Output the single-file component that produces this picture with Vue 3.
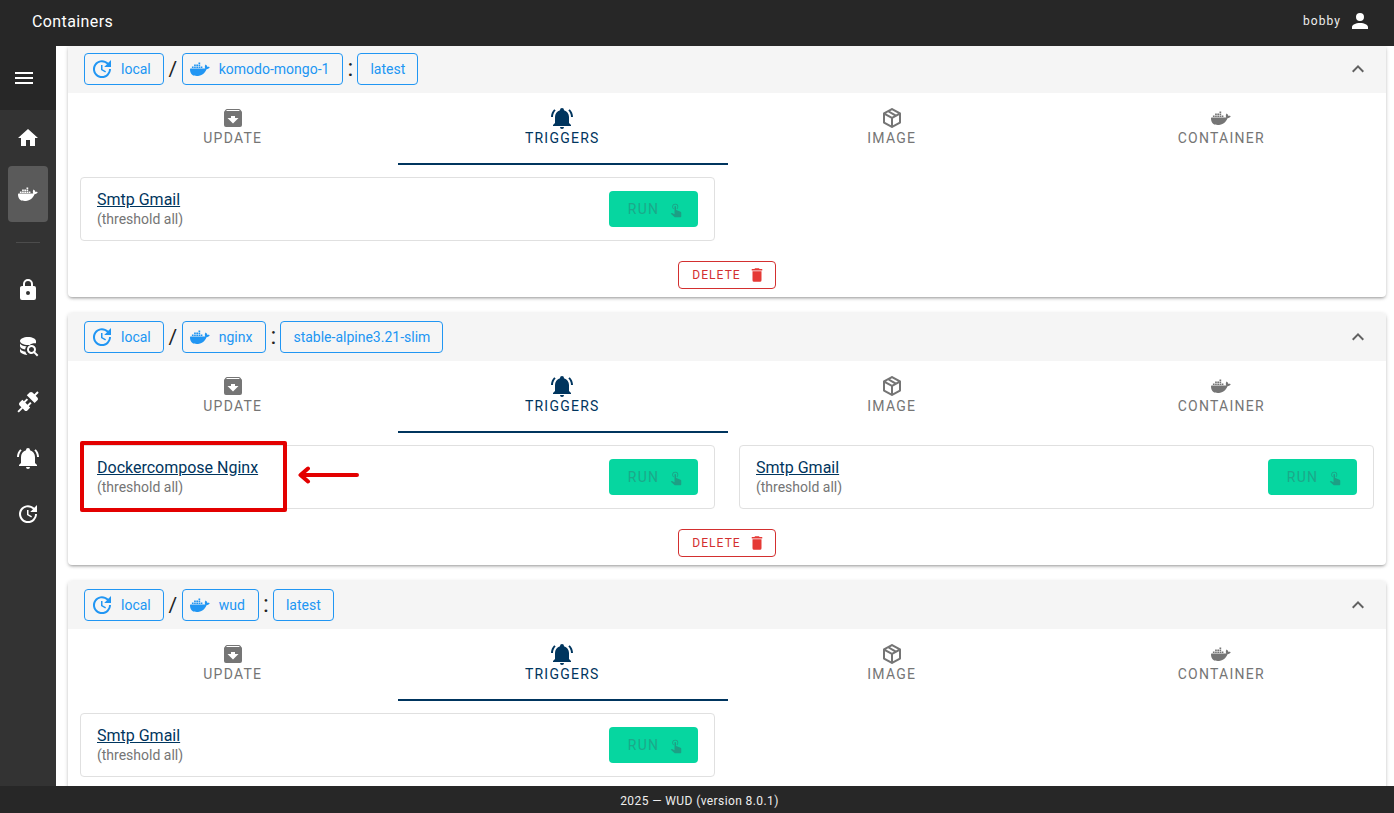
<script setup>
const p = {
  menu: 'M3,6H21V8H3V6M3,11H21V13H3V11M3,16H21V18H3V16Z',
  home: 'M10,20V14H14V20H19V12H22L12,3L2,12H5V20H10Z',
  docker: 'M21.81 10.25C21.75 10.21 21.25 9.82 20.18 9.82C19.9 9.82 19.62 9.85 19.35 9.89C19.14 8.5 17.97 7.79 17.92 7.76L17.63 7.6L17.44 7.87C17.2 8.24 17 8.65 16.9 9.08C16.7 9.88 16.82 10.64 17.23 11.28C16.74 11.55 15.95 11.62 15.79 11.62H2.62C2.28 11.62 2 11.9 2 12.24C2 13.38 2.18 14.5 2.56 15.56C3 16.68 3.64 17.5 4.47 18C5.41 18.57 7 18.9 8.78 18.9C9.59 18.9 10.39 18.83 11.19 18.68C12.29 18.5 13.34 18.11 14.31 17.56C15.11 17.09 15.81 16.5 16.42 15.8C17.45 14.63 18.06 13.33 18.5 12.17H18.69C19.81 12.17 20.5 11.72 20.88 11.34C21.13 11.11 21.32 10.83 21.45 10.5L21.53 10.27L21.81 10.25M3.9 9.6H5.6V11.1H3.9V9.6M6.1 9.6H7.8V11.1H6.1V9.6M8.3 9.6H10V11.1H8.3V9.6M10.5 9.6H12.2V11.1H10.5V9.6M12.7 9.6H14.4V11.1H12.7V9.6M6.1 7.6H7.8V9.1H6.1V7.6M8.3 7.6H10V9.1H8.3V7.6M10.5 7.6H12.2V9.1H10.5V7.6M10.5 5.6H12.2V7.1H10.5V5.6Z',
  lock: 'M12,17A2,2 0 0,0 14,15C14,13.89 13.1,13 12,13A2,2 0 0,0 10,15A2,2 0 0,0 12,17M18,8A2,2 0 0,1 20,10V20A2,2 0 0,1 18,22H6A2,2 0 0,1 4,20V10C4,8.89 4.9,8 6,8H7V6A5,5 0 0,1 12,1A5,5 0 0,1 17,6V8H18M12,3A3,3 0 0,0 9,6V8H15V6A3,3 0 0,0 12,3Z',
  db: 'M18.68,12.32C16.92,10.56 14.07,10.56 12.32,12.32C10.56,14.08 10.56,16.93 12.32,18.68C13.81,20.17 16.11,20.38 17.85,19.32L21,22.39L22.39,21L19.32,17.89C20.39,16.15 20.17,13.83 18.68,12.32M17.27,17.27C16.29,18.25 14.71,18.25 13.73,17.27C12.75,16.29 12.75,14.71 13.73,13.73C14.71,12.75 16.29,12.75 17.27,13.73C18.25,14.71 18.25,16.29 17.27,17.27M12,3C7.58,3 4,4.79 4,7C4,9.21 7.58,11 12,11C12.6,11 13.2,10.97 13.77,10.9C14.8,9.8 16.3,9.3 20,9.3V7C20,4.79 16.42,3 12,3M4,9V12C4,13.7 6.1,15 9.1,15.6C9.2,14.4 9.7,13.2 10.6,12.3C7.2,12.1 4,10.9 4,9M4,14V17C4,19 7.2,20.6 11.4,21C10.3,20.1 9.6,18.9 9.3,17.6C6.8,17.2 4,16 4,14Z',
  plug: 'M21.4 7.5C22.2 8.3 22.2 9.6 21.4 10.3L18.6 13.1L10.8 5.3L13.6 2.5C14.4 1.7 15.7 1.7 16.5 2.5L18.3 4.3L21.3 1.3L22.7 2.7L19.7 5.7L21.4 7.5M15.6 13.3L14.2 11.9L11.4 14.7L9.3 12.6L12.1 9.8L10.7 8.4L7.9 11.2L6.4 9.8L3.6 12.6C2.8 13.4 2.8 14.7 3.6 15.4L5.4 17.2L1.4 21.2L2.8 22.6L6.8 18.6L8.6 20.4C9.4 21.2 10.7 21.2 11.4 20.4L14.2 17.6L12.8 16.2L15.6 13.3Z',
  bell: 'M21,19V20H3V19L5,17V11C5,7.9 7.03,5.17 10,4.29C10,4.19 10,4.1 10,4A2,2 0 0,1 12,2A2,2 0 0,1 14,4C14,4.1 14,4.19 14,4.29C16.97,5.17 19,7.9 19,11V17L21,19M14,21A2,2 0 0,1 12,23A2,2 0 0,1 10,21M19.75,3.19L18.33,4.61C20.04,6.3 21,8.6 21,11H23C23,8.07 21.84,5.25 19.75,3.19M1,11H3C3,8.6 3.96,6.3 5.67,4.61L4.25,3.19C2.16,5.25 1,8.07 1,11Z',
  update: 'M21,10.12H14.22L16.96,7.3C14.23,4.6 9.81,4.5 7.08,7.2C4.35,9.91 4.35,14.28 7.08,17C9.81,19.7 14.23,19.7 16.96,17C18.32,15.65 19,14.08 19,12.1H21C21,14.08 20.12,16.65 18.36,18.39C14.85,21.87 9.15,21.87 5.64,18.39C2.14,14.92 2.11,9.28 5.62,5.81C9.13,2.34 14.76,2.34 18.27,5.81L21,3V10.12M12.5,8V12.25L16,14.33L15.28,15.54L11,13V8H12.5Z',
  account: 'M12,4A4,4 0 0,1 16,8A4,4 0 0,1 12,12A4,4 0 0,1 8,8A4,4 0 0,1 12,4M12,14C16.42,14 20,15.79 20,18V20H4V18C4,15.79 7.58,14 12,14Z',
  pkg: 'M21,16.5C21,16.88 20.79,17.21 20.47,17.38L12.57,21.82C12.41,21.94 12.21,22 12,22C11.79,22 11.59,21.94 11.43,21.82L3.53,17.38C3.21,17.21 3,16.88 3,16.5V7.5C3,7.12 3.21,6.79 3.53,6.62L11.43,2.18C11.59,2.06 11.79,2 12,2C12.21,2 12.41,2.06 12.57,2.18L20.47,6.62C20.79,6.79 21,7.12 21,7.5V16.5M12,4.15L10.11,5.22L16,8.61L17.96,7.5L12,4.15M6.04,7.5L12,10.85L13.96,9.75L8.08,6.35L6.04,7.5M5,15.91L11,19.29V12.58L5,9.21V15.91M19,15.91V9.21L13,12.58V19.29L19,15.91Z',
  pkgDown: 'M5.12,5L5.93,4H17.93L18.87,5M12,17.5L6.5,12H10V10H14V12H17.5L12,17.5M20.54,5.23L19.15,3.55C18.88,3.21 18.47,3 18,3H6C5.53,3 5.12,3.21 4.84,3.55L3.46,5.23C3.17,5.57 3,6 3,6.5V19A2,2 0 0,0 5,21H19A2,2 0 0,0 21,19V6.5C21,6 20.83,5.57 20.54,5.23Z',
  tap: 'M10,9A1,1 0 0,1 11,8A1,1 0 0,1 12,9V13.47L13.21,13.6L18.15,15.79C18.68,16.03 19,16.56 19,17.14V21.5C18.97,22.32 18.32,22.97 17.5,23H11C10.62,23 10.26,22.85 10,22.57L5.1,18.37L5.84,17.6C6.03,17.39 6.3,17.28 6.58,17.28H6.8L10,19V9M11,5A4,4 0 0,1 15,9C15,10.5 14.2,11.77 13,12.46V11.24C13.61,10.69 14,9.89 14,9A3,3 0 0,0 11,6A3,3 0 0,0 8,9C8,9.89 8.39,10.69 9,11.24V12.46C7.8,11.77 7,10.5 7,9A4,4 0 0,1 11,5Z',
  del: 'M19,4H15.5L14.5,3H9.5L8.5,4H5V6H19M6,19A2,2 0 0,0 8,21H16A2,2 0 0,0 18,19V7H6V19Z',
  up: 'M7.41,15.41L12,10.83L16.59,15.41L18,14L12,8L6,14L7.41,15.41Z'
}
const navTop = [{ i: p.home }, { i: p.docker, active: true }]
const navBottom = [p.lock, p.db, p.plug, p.bell, p.update]
const tabs = [
  { icon: p.pkgDown, label: 'Update' },
  { icon: p.bell, label: 'Triggers', active: true },
  { icon: p.pkg, label: 'Image' },
  { icon: p.docker, label: 'Container' }
]
const cards = [
  { name: 'komodo-mongo-1', tag: 'latest', actions: true, triggers: [{ name: 'Smtp Gmail' }] },
  { name: 'nginx', tag: 'stable-alpine3.21-slim', actions: true, triggers: [{ name: 'Dockercompose Nginx', mark: true }, { name: 'Smtp Gmail' }] },
  { name: 'wud', tag: 'latest', actions: false, triggers: [{ name: 'Smtp Gmail' }] }
]
</script>

<template>
  <div class="app">
    <header class="topbar">
      <span class="title">Containers</span>
      <span class="user">bobby</span>
      <svg class="ic" viewBox="0 0 24 24"><path :d="p.account" /></svg>
    </header>
    <div class="middle">
      <nav class="side">
        <div class="burger"><svg class="ic" viewBox="0 0 24 24"><path :d="p.menu" /></svg></div>
        <div v-for="n in navTop" :key="n.i" class="nav" :class="{ active: n.active }">
          <svg class="ic" viewBox="0 0 24 24"><path :d="n.i" /></svg>
        </div>
        <div class="divider"></div>
        <div v-for="n in navBottom" :key="n" class="nav">
          <svg class="ic" viewBox="0 0 24 24"><path :d="n" /></svg>
        </div>
      </nav>
      <main class="main">
        <section v-for="c in cards" :key="c.name" class="card">
          <div class="head">
            <span class="chip"><svg class="ic" viewBox="0 0 24 24"><path :d="p.update" /></svg>local</span>
            <span class="sep">/</span>
            <span class="chip wide"><svg class="ic" viewBox="0 0 24 24"><path :d="p.docker" /></svg>{{ c.name }}</span>
            <span class="sep colon">:</span>
            <span class="chip plain">{{ c.tag }}</span>
            <svg class="ic chev" viewBox="0 0 24 24"><path :d="p.up" /></svg>
          </div>
          <div class="tabs">
            <div v-for="t in tabs" :key="t.label" class="tab" :class="{ on: t.active }">
              <svg class="ic" viewBox="0 0 24 24"><path :d="t.icon" /></svg>
              <span>{{ t.label }}</span>
            </div>
          </div>
          <div class="triggers">
            <div v-for="t in c.triggers" :key="t.name" class="trigger">
              <div class="info">
                <a class="link">{{ t.name }}</a>
                <span class="thr">(threshold all)</span>
              </div>
              <button class="run">Run<svg class="ic" viewBox="0 0 24 24"><path :d="p.tap" /></svg></button>
              <template v-if="t.mark">
                <div class="redbox"></div>
                <svg class="arrow" viewBox="0 0 62 18"><path d="M60 9H4M11 2.5L3.5 9L11 15.5" /></svg>
              </template>
            </div>
          </div>
          <div v-if="c.actions" class="actions">
            <button class="delete">Delete<svg class="ic" viewBox="0 0 24 24"><path :d="p.del" /></svg></button>
          </div>
        </section>
      </main>
    </div>
    <footer class="foot">2025 — WUD (version 8.0.1)</footer>
  </div>
</template>

<style>
html, body { margin: 0; overflow: hidden; }
</style>

<style scoped>
.app { height: 100vh; display: flex; flex-direction: column; font-family: Roboto, "Liberation Sans", sans-serif; background: #fff; }
.ic { width: 24px; height: 24px; fill: currentColor; flex: none; display: block; }

.topbar { height: 46px; box-sizing: border-box; flex: none; background: #272727; color: #fff; display: flex; align-items: center; padding: 0 22px 4px 32px; z-index: 2; }
.title { font-size: 16px; letter-spacing: .025em; flex: 1; }
.user { font-size: 12px; letter-spacing: .0892em; margin-right: 7px; color: #eee; }

.middle { flex: 1; min-height: 0; display: flex; }
.side { width: 56px; flex: none; background: #333; color: #fff; display: flex; flex-direction: column; }
.burger { height: 64px; flex: none; background: #272727; display: flex; align-items: center; padding-left: 12px; }
.nav { height: 56px; flex: none; margin: 0 8px; border-radius: 4px; display: flex; align-items: center; justify-content: center; }
.nav.active { background: #5a5a5a; }
.divider { height: 1px; margin: 20px 16px 19px; background: #4c4c4c; flex: none; }

.main { flex: 1; min-width: 0; overflow: hidden; padding: 0 8px 0 12px; display: flex; flex-direction: column; gap: 16px; }
.card { flex: none; min-height: 252px; background: #fff; border-radius: 4px; box-shadow: 0 2px 3px -1px rgba(0,0,0,.3), 0 1px 4px rgba(0,0,0,.16); }
.card:first-child { margin-top: -1px; }
.head { height: 48px; background: #f5f5f5; display: flex; align-items: center; padding: 0 16px; border-radius: 4px 4px 0 0; }
.chip { height: 32px; box-sizing: border-box; border: 1px solid #2196f3; border-radius: 4px; color: #2196f3; font-size: 14px; display: inline-flex; align-items: center; padding: 0 12px 0 5px; background: transparent; }
.chip.wide { padding-right: 13px; }
.chip .ic { margin-right: 7px; }
.chip.plain { padding: 0 12px; }
.sep { width: 18px; text-align: center; font-size: 21px; color: #222; line-height: 32px; }
.colon { width: 14px; font-size: 24px; position: relative; top: -1px; }
.chev { margin-left: auto; color: #616161; }

.tabs { display: grid; grid-template-columns: repeat(4, 1fr); height: 72px; }
.tab { position: relative; display: flex; flex-direction: column; align-items: center; padding-top: 13px; box-sizing: border-box; color: #757575; font-size: 14px; letter-spacing: .0892em; text-transform: uppercase; line-height: 20px; }
.tab span { margin-top: -2px; }
.tab.on { color: #00355e; }
.tab.on::after { content: ""; position: absolute; left: 0; right: -1px; bottom: 0; height: 2px; background: #00355e; }

.triggers { display: grid; grid-template-columns: 1fr 1fr; gap: 24px; padding: 12px 12px 0; }
.trigger { position: relative; height: 64px; box-sizing: border-box; border: 1px solid #e0e0e0; border-radius: 4px; display: flex; align-items: center; justify-content: space-between; padding: 0 16px; }
.info { display: flex; flex-direction: column; }
.link { font-size: 16px; line-height: 20px; margin: 1px 0 -1px; color: #00355e; text-decoration: underline; }
.thr { font-size: 14px; line-height: 20px; color: #757575; }
.run { width: 89px; height: 36px; box-sizing: border-box; border: 0; border-radius: 4px; background: #06d6a0; color: #1ba98a; font: inherit; font-size: 14px; letter-spacing: .0892em; text-transform: uppercase; display: flex; align-items: center; justify-content: center; padding: 0 0 0 6px; }
.run .ic { width: 18px; height: 18px; margin-left: 8px; color: #1d9f85; }
.redbox { position: absolute; left: -1px; top: -5px; width: 207px; height: 71px; box-sizing: border-box; border: 4px solid #e30000; border-radius: 2px; }
.arrow { position: absolute; left: 216px; top: 20px; width: 62px; height: 18px; fill: none; stroke: #e30000; stroke-width: 4; stroke-linecap: round; stroke-linejoin: round; }

.actions { display: flex; justify-content: center; padding: 20px 0 8px; }
.delete { width: 98px; height: 28px; box-sizing: border-box; border: 1px solid #d32f2f; border-radius: 4px; background: #fff; color: #d32f2f; font: inherit; font-size: 12px; letter-spacing: .0892em; text-transform: uppercase; display: flex; align-items: center; justify-content: center; padding: 0 0 0 4px; }
.delete .ic { width: 18px; height: 18px; margin-left: 7px; color: #e53935; }

.foot { height: 27px; box-sizing: border-box; flex: none; background: #272727; color: #eee; display: flex; align-items: center; justify-content: center; padding: 2px 0 0 5px; font-size: 12px; letter-spacing: .0333em; z-index: 2; }
</style>
